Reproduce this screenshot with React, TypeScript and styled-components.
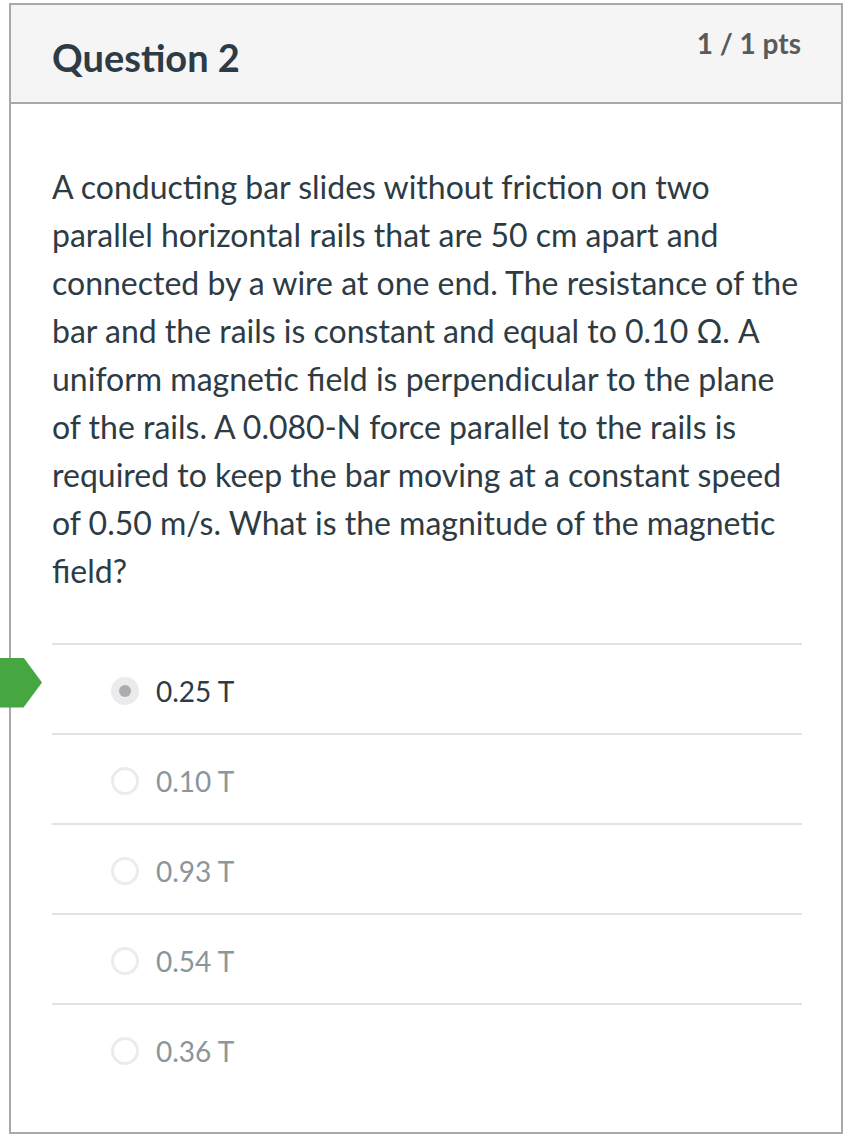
import React from 'react';
import styled, { createGlobalStyle } from 'styled-components';

const GlobalStyle = createGlobalStyle`
  html, body {
    margin: 0;
    padding: 0;
    background: #fff;
  }
  body {
    font-family: Lato, "Open Sans", sans-serif;
    color: #2d3b45;
  }
`;

const questionLines = [
  'A conducting bar slides without friction on two',
  'parallel horizontal rails that are 50 cm apart and',
  'connected by a wire at one end. The resistance of the',
  'bar and the rails is constant and equal to 0.10 Ω. A',
  'uniform magnetic field is perpendicular to the plane',
  'of the rails. A 0.080-N force parallel to the rails is',
  'required to keep the bar moving at a constant speed',
  'of 0.50 m/s. What is the magnitude of the magnetic',
  'field?',
];

const answers = [
  { label: '0.25 T', selected: true },
  { label: '0.10 T', selected: false },
  { label: '0.93 T', selected: false },
  { label: '0.54 T', selected: false },
  { label: '0.36 T', selected: false },
];

const App = () => {
  return (
    <>
      <GlobalStyle />
      <QuestionBox>
        <Header>
          <Title>Question 2</Title>
          <Points>1 / 1 pts</Points>
        </Header>
        <Body>
          <QuestionText>
            {questionLines.map((line, i) => (
              <React.Fragment key={i}>
                {line}
                {i < questionLines.length - 1 && <br />}
              </React.Fragment>
            ))}
          </QuestionText>
          <AnswerList>
            {answers.map((a) => (
              <AnswerRow key={a.label}>
                {a.selected && <CorrectArrow />}
                <Radio $selected={a.selected} />
                <AnswerLabel $selected={a.selected}>{a.label}</AnswerLabel>
              </AnswerRow>
            ))}
          </AnswerList>
        </Body>
      </QuestionBox>
    </>
  );
};

const QuestionBox = styled.div`
  position: relative;
  width: 830px;
  margin: 3px 5px 0 9px;
  border: 2px solid #a9a9a9;
  background: #fff;
`;

const Header = styled.div`
  display: flex;
  justify-content: space-between;
  align-items: flex-start;
  height: 97px;
  padding: 0 40px 0 41px;
  background: #f5f5f5;
  border-bottom: 2px solid #a9a9a9;
`;

const Title = styled.h2`
  margin: 30px 0 0;
  font-size: 38px;
  line-height: 1.2;
  font-weight: 700;
  color: #2d3b45;
`;

const Points = styled.div`
  margin-top: 22px;
  font-size: 28px;
  line-height: 1.2;
  font-weight: 700;
  color: #5a5a5a;
`;

const Body = styled.div`
  padding: 59px 39px 39px 41px;
`;

const QuestionText = styled.p`
  margin: 0 0 48px;
  font-size: 32px;
  line-height: 48px;
  white-space: nowrap;
  color: #2d3b45;
`;

const AnswerList = styled.div`
  display: flex;
  flex-direction: column;
`;

const AnswerRow = styled.div`
  display: flex;
  align-items: center;
  gap: 17px;
  box-sizing: border-box;
  height: 90px;
  padding: 3px 0 0 59px;
  border-top: 2px solid #e2e2e2;
`;

const CorrectArrow = styled.span`
  position: absolute;
  left: -11px;
  margin-top: -16px;
  width: 42px;
  height: 50px;
  background: #46a640;
  clip-path: polygon(0 0, 56% 0, 100% 50%, 56% 100%, 0 100%);
`;

const Radio = styled.span<{ $selected: boolean }>`
  position: relative;
  box-sizing: border-box;
  width: 28px;
  height: 28px;
  border-radius: 50%;
  border: ${(p) => (p.$selected ? 'none' : '3px solid #ececec')};
  background: ${(p) => (p.$selected ? '#ebebed' : '#fff')};
  &::after {
    content: '';
    display: ${(p) => (p.$selected ? 'block' : 'none')};
    position: absolute;
    left: 8px;
    top: 8px;
    width: 12px;
    height: 12px;
    border-radius: 50%;
    background: #acacb0;
  }
`;

const AnswerLabel = styled.span<{ $selected: boolean }>`
  font-size: 28px;
  line-height: 1;
  color: ${(p) => (p.$selected ? '#2d3b45' : '#8a959c')};
`;

export default App;
